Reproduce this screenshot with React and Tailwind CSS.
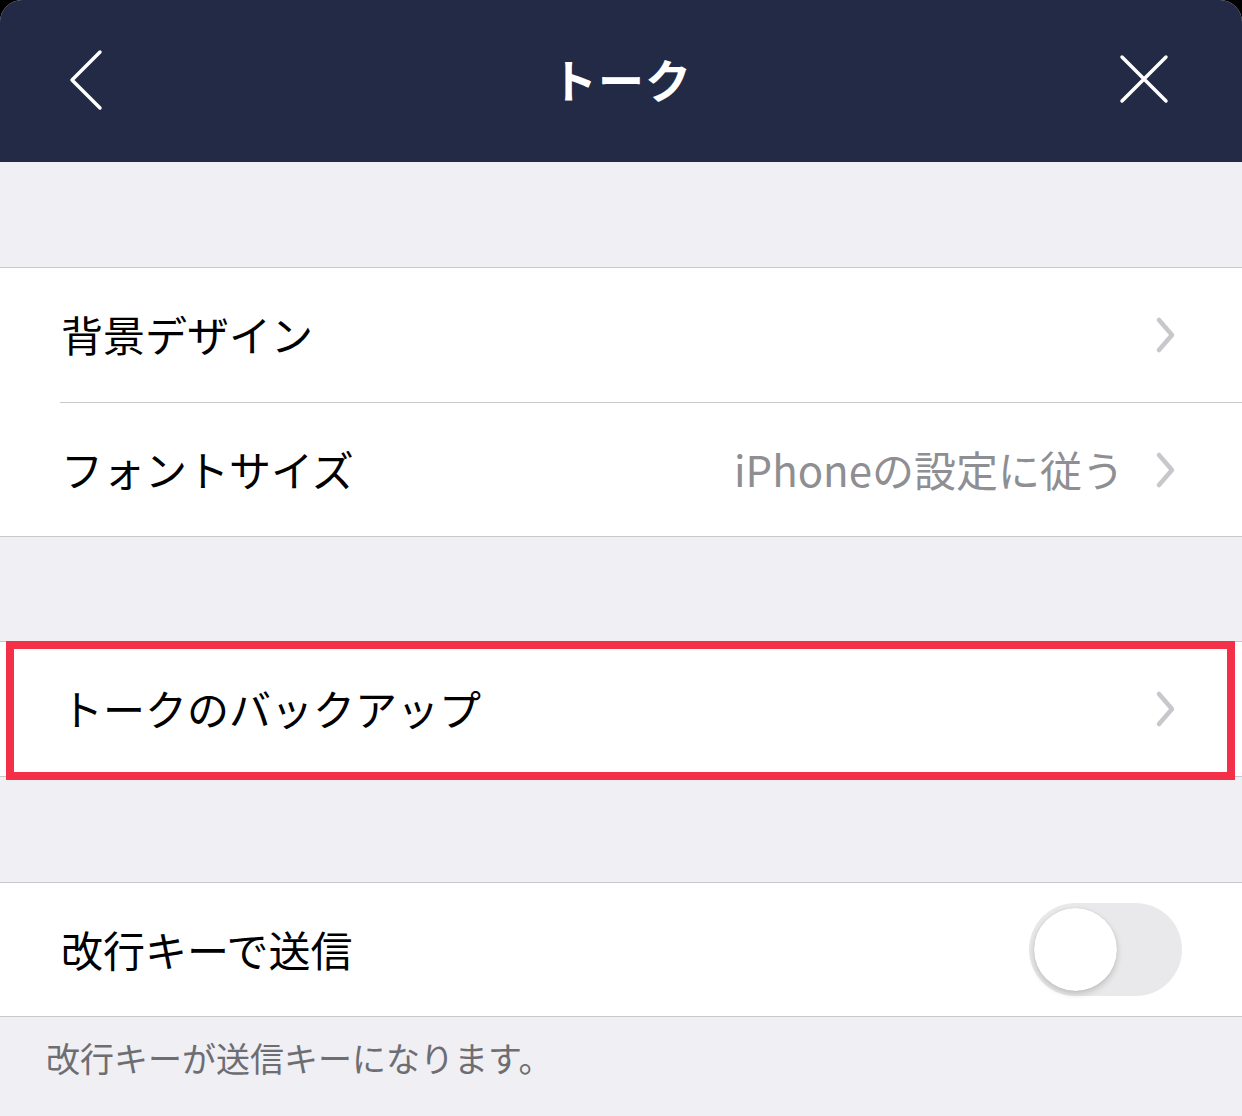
import React from "react";

const font = { fontFamily: '"Noto Sans CJK JP", "Noto Sans", sans-serif' };

function Chevron() {
  return (
    <svg width="24" height="40" viewBox="0 0 24 40" className="shrink-0">
      <path d="M5 5 L18 20 L5 35" fill="none" stroke="#c7c7cc" strokeWidth="4.5" strokeLinecap="round" strokeLinejoin="round" />
    </svg>
  );
}

export default function App() {
  return (
    <div className="w-[1242px] h-[1116px] bg-black overflow-hidden" style={font}>
      <div className="w-full h-full bg-[#efeff4] rounded-t-[22px] overflow-hidden flex flex-col">
        {/* Header */}
        <div className="h-[162px] bg-[#222a45] grid grid-cols-[1fr_auto_1fr] items-center px-[66px] shrink-0">
          <svg width="40" height="64" viewBox="0 0 40 64" className="ml-[1px] -mt-[2px]">
            <path d="M33 4 L5 32 L33 60" fill="none" stroke="#fff" strokeWidth="3.5" strokeLinecap="round" strokeLinejoin="round" />
          </svg>
          <div className="text-white text-[46px] font-bold tracking-[1px] leading-none -mt-[6px] ml-[1px]">トーク</div>
          <svg width="52" height="52" viewBox="0 0 52 52" className="justify-self-end mr-[6px] -mt-[4px]">
            <path d="M4 4 L48 48 M48 4 L4 48" fill="none" stroke="#fff" strokeWidth="3.5" strokeLinecap="round" />
          </svg>
        </div>

        <div className="h-[105px] shrink-0" />

        {/* Group 1 */}
        <div className="bg-white border-t border-b border-[#c8c7cc] shrink-0">
          <div className="h-[134px] flex items-center pl-[61px] pr-[64px]">
            <div className="flex-1 text-[42px] text-black leading-none -mt-[2px]">背景デザイン</div>
            <Chevron />
          </div>
          <div className="ml-[60px] border-t border-[#c8c7cc]" />
          <div className="h-[133px] flex items-center pl-[61px] pr-[64px]">
            <div className="flex-1 text-[42px] text-black leading-none -mt-[2px]">フォントサイズ</div>
            <div className="text-[42px] text-[#8e8e93] leading-none mr-[30px] -mt-[2px]">iPhoneの設定に従う</div>
            <Chevron />
          </div>
        </div>

        <div className="h-[104px] shrink-0" />

        {/* Group 2 with highlight */}
        <div className="relative bg-white border-t border-b border-[#c8c7cc] shrink-0">
          <div className="h-[134px] flex items-center pl-[61px] pr-[64px]">
            <div className="flex-1 text-[42px] text-black leading-none -mt-[2px]">トークのバックアップ</div>
            <Chevron />
          </div>
          <div className="absolute left-[6px] right-[7px] -top-[1px] -bottom-[4px] border-[8px] border-[#f33047]" />
        </div>

        <div className="h-[105px] shrink-0" />

        {/* Group 3 */}
        <div className="bg-white border-t border-b border-[#c8c7cc] shrink-0">
          <div className="h-[133px] flex items-center pl-[61px] pr-[60px]">
            <div className="flex-1 text-[42px] text-black leading-none -mt-[2px]">改行キーで送信</div>
            <div className="w-[153px] h-[93px] rounded-full bg-[#e9e9eb] p-[5px] flex items-center">
              <div className="w-[83px] h-[83px] rounded-full bg-white shadow-[0_3px_6px_rgba(0,0,0,0.18),0_0_1px_rgba(0,0,0,0.2)]" />
            </div>
          </div>
        </div>

        <div className="pl-[46px] pt-[24px] text-[34px] text-[#6d6d72] leading-none">改行キーが送信キーになります。</div>
      </div>
    </div>
  );
}
